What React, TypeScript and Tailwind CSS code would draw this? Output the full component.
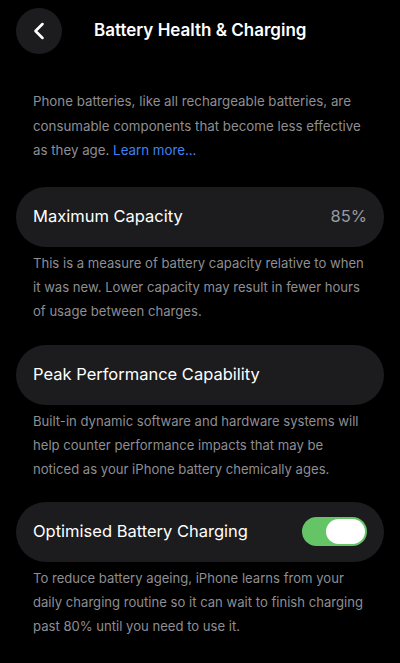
import { ChevronLeft } from 'lucide-react';

function Card({ children }: { children: React.ReactNode }) {
  return (
    <div className="mx-4 h-[60px] rounded-full bg-[#1c1c1e] pl-[17px] pr-[17px] flex items-center justify-between">
      {children}
    </div>
  );
}

function Note({ children }: { children: React.ReactNode }) {
  return (
    <p className="pl-[33px] pr-[28px] pt-[4px] text-[13.1px] leading-[24px] text-[#8e8e93]">{children}</p>
  );
}

export default function App() {
  return (
    <div className="w-[400px] h-[663px] bg-black text-white overflow-hidden" style={{ fontFamily: 'Inter, "Noto Sans", sans-serif' }}>
      <div className="flex items-center pt-[8px] pl-4">
        <button className="w-[46px] h-[46px] rounded-full bg-[#1c1c1e] flex items-center justify-center">
          <ChevronLeft className="w-7 h-7 text-white" strokeWidth={2.2} />
        </button>
        <h1 className="ml-[32px] text-[17px] font-semibold">Battery Health &amp; Charging</h1>
      </div>

      <p className="pl-[33px] pr-[28px] pt-[35px] text-[13.3px] leading-[24.5px] text-[#8e8e93]">
        Phone batteries, like all rechargeable batteries, are consumable components that become less effective as they age.{' '}
        <span className="text-[#3d82f7]">Learn more...</span>
      </p>

      <div className="mt-[24px]">
        <Card>
          <span className="text-[16.5px]">Maximum Capacity</span>
          <span className="text-[16.5px] text-[#9a9a9f]">85%</span>
        </Card>
        <Note>
          This is a measure of battery capacity relative to when it was new. Lower capacity may result in fewer hours of usage between charges.
        </Note>
      </div>

      <div className="mt-[22px]">
        <Card>
          <span className="text-[16.5px]">Peak Performance Capability</span>
        </Card>
        <Note>
          Built-in dynamic software and hardware systems will help counter performance impacts that may be noticed as your iPhone battery chemically ages.
        </Note>
      </div>

      <div className="mt-[21px]">
        <Card>
          <span className="text-[16.5px]">Optimised Battery Charging</span>
          <div className="w-[65px] h-[29px] rounded-full bg-[#65c466] flex items-center justify-end p-[2px]">
            <div className="w-[39px] h-[25px] rounded-full bg-white" />
          </div>
        </Card>
        <Note>
          To reduce battery ageing, iPhone learns from your daily charging routine so it can wait to finish charging past 80% until you need to use it.
        </Note>
      </div>
    </div>
  );
}
